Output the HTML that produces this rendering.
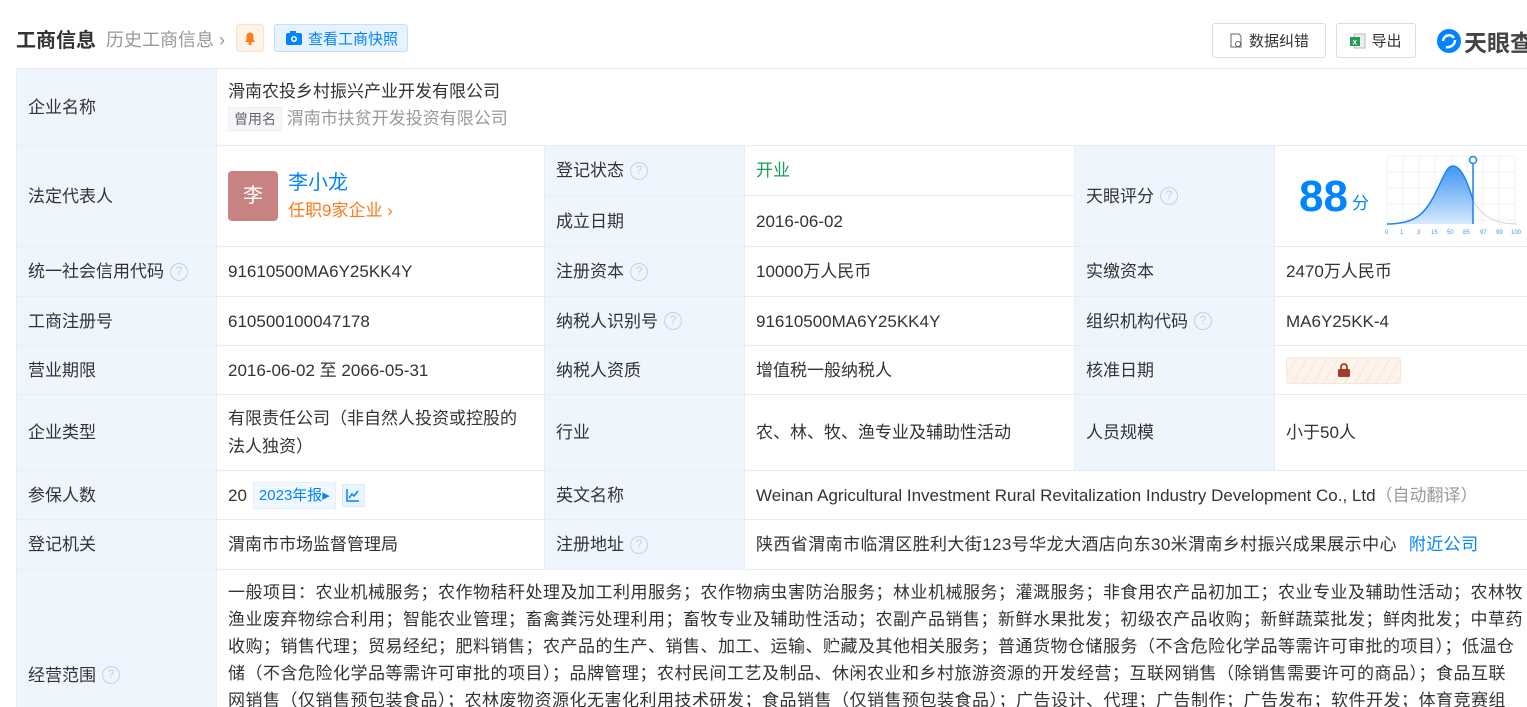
<!DOCTYPE html><html><head><meta charset="utf-8"><style>
*{margin:0;padding:0;box-sizing:border-box}
html{overflow:hidden;height:707px}
body{width:1527px;height:707px;overflow:hidden;background:#fff;font-family:"Liberation Sans","Noto Sans CJK SC",sans-serif;color:#333;position:relative;font-size:17px}
.c{position:absolute;border-left:1px solid #e4eef6;border-top:1px solid #e4eef6;display:flex;align-items:center;padding-left:11px;line-height:27px;white-space:nowrap}
.l{background:#eef5fc}
.q{display:inline-block;width:18px;height:18px;border:1.5px solid #b9d4ee;border-radius:50%;color:#b9d4ee;font-size:12px;line-height:15px;text-align:center;margin-left:6px;vertical-align:middle}
.btn{position:absolute;top:23px;height:35px;border:1px solid #ddd;border-radius:3px;display:flex;align-items:center;justify-content:center;font-size:15px;color:#333}
.blue{color:#0084ff}
.sc div{white-space:nowrap;line-height:27px;letter-spacing:0.5px}
</style></head><body>
<div style="position:absolute;left:16px;top:24px;font-size:20px;font-weight:bold;color:#333">工商信息</div>
<div style="position:absolute;left:106px;top:26px;font-size:18px;color:#999">历史工商信息 ›</div>
<div style="position:absolute;left:236px;top:24px;width:28px;height:28px;background:#fff3e8;border:1px solid #fde0c8;border-radius:3px"><svg width="26" height="26" viewBox="0 0 26 26"><path d="M8 17h10l-1.5-2v-4a3.5 3.5 0 0 0-7 0v4z" fill="#ff7a1a"/><circle cx="13" cy="18.5" r="1.6" fill="#ff7a1a"/></svg></div>
<div style="position:absolute;left:274px;top:24px;width:134px;height:28px;background:#e6f2ff;border:1px solid #c5e0ff;border-radius:3px;font-size:15px;color:#0084ff;display:flex;align-items:center;padding-left:10px;white-space:nowrap"><svg width="18" height="16" viewBox="0 0 18 16" style="margin-right:5px"><rect x="1" y="3" width="16" height="12" rx="2" fill="#0084ff"/><rect x="5" y="1" width="6" height="3" fill="#0084ff"/><circle cx="9" cy="9" r="3" fill="#fff"/><circle cx="9" cy="9" r="1.5" fill="#0084ff"/></svg>查看工商快照</div>
<div class="btn" style="left:1212px;width:114px"><svg width="14" height="16" viewBox="0 0 14 16" style="margin-right:6px"><path d="M2 1h8l2 2v11H2z" fill="none" stroke="#666"/><circle cx="9" cy="11" r="2.5" fill="#fff" stroke="#666"/></svg>数据纠错</div>
<div class="btn" style="left:1336px;width:80px"><svg width="16" height="18" viewBox="0 0 16 18" style="margin-right:5px"><rect x="4" y="2" width="11" height="14" fill="#eee" stroke="#bbb"/><rect x="0" y="5" width="10" height="9" fill="#1f9d55"/><text x="2.5" y="12.5" font-size="8" fill="#fff" font-family="Liberation Sans" font-weight="bold">x</text></svg>导出</div>
<div style="position:absolute;left:1436px;top:24px;display:flex;align-items:center;white-space:nowrap"><svg width="26" height="26" viewBox="0 0 26 26"><circle cx="13" cy="13" r="12" fill="#0084ff"/><path d="M7 13a6 6 0 0 1 11-3M10 19c4 1 9-2 9-7" stroke="#fff" stroke-width="2.5" fill="none"/></svg><span style="font-size:23px;font-weight:bold;color:#444;margin-left:2px">天眼查</span></div>

<div class="c l" style="left:16px;top:68px;width:200px;height:77px">企业名称</div>
<div class="c" style="left:216px;top:68px;width:1311px;height:77px;display:block;padding-top:9px">滑南农投乡村振兴产业开发有限公司<br><span style="display:inline-block;background:#f5f7fa;border:1px solid #eee;font-size:14px;color:#666;padding:0 5px;line-height:22px;margin-top:2px">曾用名</span> <span style="color:#999">渭南市扶贫开发投资有限公司</span></div>

<div class="c l" style="left:16px;top:145px;width:200px;height:101px">法定代表人</div>
<div class="c" style="left:216px;top:145px;width:328px;height:101px"><div style="width:50px;height:50px;background:#c98282;border-radius:4px;color:#fff;font-size:20px;display:flex;align-items:center;justify-content:center;margin-right:10px">李</div><div><div class="blue" style="font-size:20px;line-height:28px">李小龙</div><div style="color:#ff7a1a">任职9家企业 ›</div></div></div>
<div class="c l" style="left:544px;top:145px;width:200px;height:50px">登记状态<span class="q">?</span></div>
<div class="c l" style="left:544px;top:195px;width:200px;height:51px">成立日期</div>
<div class="c" style="left:744px;top:145px;width:330px;height:50px;color:#13a155">开业</div>
<div class="c" style="left:744px;top:195px;width:330px;height:51px">2016-06-02</div>
<div class="c l" style="left:1074px;top:145px;width:200px;height:101px">天眼评分<span class="q">?</span></div>
<div class="c" style="left:1274px;top:145px;width:253px;height:101px;padding-left:24px"><span class="blue" style="font-size:44px;font-weight:bold">88</span><span class="blue" style="font-size:17px;margin:14px 0 0 4px">分</span>
<svg style="position:absolute;left:110px;top:8px" width="140" height="84" viewBox="0 0 140 84"><g stroke="#eef2f8"><path d="M2 2v68M18 2v68M34 2v68M50 2v68M66 2v68M82 2v68M98 2v68M114 2v68M130 2v68M2 2h128M2 18h128M2 34h128M2 50h128M2 66h128"/></g><defs><linearGradient id="g" x1="0" y1="0" x2="0" y2="1"><stop offset="0" stop-color="#3d96f5"/><stop offset="1" stop-color="#d7e9fd"/></linearGradient></defs><path d="M2 70C30 70 40 60 50 40S62 12 68 12S80 20 88 46L88 70z" fill="url(#g)"/><path d="M2 70C30 70 40 60 50 40S62 12 68 12S80 20 88 46" stroke="#1a82f0" stroke-width="1.5" fill="none"/><path d="M88 46C96 62 110 70 132 70" stroke="#ccd7e4" fill="none"/><path d="M88 6V70" stroke="#1a82f0" stroke-width="1.5"/><circle cx="88" cy="6" r="3.5" fill="#fff" stroke="#1a82f0" stroke-width="1.5"/><g font-size="6" fill="#3d96f5" font-family="Liberation Sans"><text x="0" y="80">0</text><text x="15" y="80">1</text><text x="32" y="80">3</text><text x="46" y="80">15</text><text x="62" y="80">50</text><text x="78" y="80">85</text><text x="95" y="80">97</text><text x="111" y="80">99</text><text x="126" y="80">100</text></g></svg></div>

<div class="c l" style="left:16px;top:246px;width:200px;height:50px">统一社会信用代码<span class="q">?</span></div>
<div class="c" style="left:216px;top:246px;width:328px;height:50px">91610500MA6Y25KK4Y</div>
<div class="c l" style="left:544px;top:246px;width:200px;height:50px">注册资本<span class="q">?</span></div>
<div class="c" style="left:744px;top:246px;width:330px;height:50px">10000万人民币</div>
<div class="c l" style="left:1074px;top:246px;width:200px;height:50px">实缴资本</div>
<div class="c" style="left:1274px;top:246px;width:253px;height:50px">2470万人民币</div>

<div class="c l" style="left:16px;top:296px;width:200px;height:49px">工商注册号</div>
<div class="c" style="left:216px;top:296px;width:328px;height:49px">610500100047178</div>
<div class="c l" style="left:544px;top:296px;width:200px;height:49px">纳税人识别号<span class="q">?</span></div>
<div class="c" style="left:744px;top:296px;width:330px;height:49px">91610500MA6Y25KK4Y</div>
<div class="c l" style="left:1074px;top:296px;width:200px;height:49px">组织机构代码<span class="q">?</span></div>
<div class="c" style="left:1274px;top:296px;width:253px;height:49px">MA6Y25KK-4</div>

<div class="c l" style="left:16px;top:345px;width:200px;height:49px">营业期限</div>
<div class="c" style="left:216px;top:345px;width:328px;height:49px">2016-06-02 至 2066-05-31</div>
<div class="c l" style="left:544px;top:345px;width:200px;height:49px">纳税人资质</div>
<div class="c" style="left:744px;top:345px;width:330px;height:49px">增值税一般纳税人</div>
<div class="c l" style="left:1074px;top:345px;width:200px;height:49px">核准日期</div>
<div class="c" style="left:1274px;top:345px;width:253px;height:49px"><div style="width:115px;height:27px;border:1px solid #f8e6d6;border-radius:3px;background:repeating-linear-gradient(120deg,#fcf3ea 0 8px,#f3e6da 8px 9px);display:flex;align-items:center;justify-content:center"><svg width="16" height="16" viewBox="0 0 16 16"><path d="M5 7V5a3 3 0 0 1 6 0v2" stroke="#a13d22" stroke-width="1.8" fill="none"/><rect x="2" y="7" width="12" height="8" rx="1.5" fill="#a13d22"/></svg></div></div>

<div class="c l" style="left:16px;top:394px;width:200px;height:76px">企业类型</div>
<div class="c" style="left:216px;top:394px;width:328px;height:76px;line-height:28px">有限责任公司（非自然人投资或控股的<br>法人独资）</div>
<div class="c l" style="left:544px;top:394px;width:200px;height:76px">行业</div>
<div class="c" style="left:744px;top:394px;width:330px;height:76px">农、林、牧、渔专业及辅助性活动</div>
<div class="c l" style="left:1074px;top:394px;width:200px;height:76px">人员规模</div>
<div class="c" style="left:1274px;top:394px;width:253px;height:76px">小于50人</div>

<div class="c l" style="left:16px;top:470px;width:200px;height:49px">参保人数</div>
<div class="c" style="left:216px;top:470px;width:328px;height:49px">20<span style="margin-left:6px;background:#f0f7ff;border:1px solid #e2effd;color:#0084ff;font-size:15px;padding:0 5px;line-height:25px">2023年报▸</span><span style="margin-left:6px;width:23px;height:23px;background:#eaf4ff;border:1px solid #d8e9fb;display:flex;align-items:center;justify-content:center"><svg width="14" height="14" viewBox="0 0 14 14"><path d="M1 1v12h12M3 10l3-4 2 2 4-5" stroke="#0084ff" stroke-width="1.5" fill="none"/></svg></span></div>
<div class="c l" style="left:544px;top:470px;width:200px;height:49px">英文名称</div>
<div class="c" style="left:744px;top:470px;width:783px;height:49px;overflow:hidden">Weinan Agricultural Investment Rural Revitalization Industry Development Co., Ltd<span style="color:#999">（自动翻译）</span></div>

<div class="c l" style="left:16px;top:519px;width:200px;height:50px">登记机关</div>
<div class="c" style="left:216px;top:519px;width:328px;height:50px">渭南市市场监督管理局</div>
<div class="c l" style="left:544px;top:519px;width:200px;height:50px">注册地址<span class="q">?</span></div>
<div class="c" style="left:744px;top:519px;width:783px;height:50px;letter-spacing:0.4px;overflow:hidden">陕西省渭南市临渭区胜利大街123号华龙大酒店向东30米渭南乡村振兴成果展示中心<span class="blue" style="margin-left:12px">附近公司</span></div>

<div class="c l" style="left:16px;top:569px;width:200px;height:138px;align-items:flex-start;padding-top:92px">经营范围<span class="q" style="margin-top:4px">?</span></div>
<div class="c sc" style="left:216px;top:569px;width:1311px;height:138px;display:block;padding-top:9px;overflow:hidden">
<div>一般项目：农业机械服务；农作物秸秆处理及加工利用服务；农作物病虫害防治服务；林业机械服务；灌溉服务；非食用农产品初加工；农业专业及辅助性活动；农林牧</div>
<div>渔业废弃物综合利用；智能农业管理；畜禽粪污处理利用；畜牧专业及辅助性活动；农副产品销售；新鲜水果批发；初级农产品收购；新鲜蔬菜批发；鲜肉批发；中草药</div>
<div>收购；销售代理；贸易经纪；肥料销售；农产品的生产、销售、加工、运输、贮藏及其他相关服务；普通货物仓储服务（不含危险化学品等需许可审批的项目）；低温仓</div>
<div>储（不含危险化学品等需许可审批的项目）；品牌管理；农村民间工艺及制品、休闲农业和乡村旅游资源的开发经营；互联网销售（除销售需要许可的商品）；食品互联</div>
<div>网销售（仅销售预包装食品）；农林废物资源化无害化利用技术研发；食品销售（仅销售预包装食品）；广告设计、代理；广告制作；广告发布；软件开发；体育竞赛组</div>
</div>
</body></html>
